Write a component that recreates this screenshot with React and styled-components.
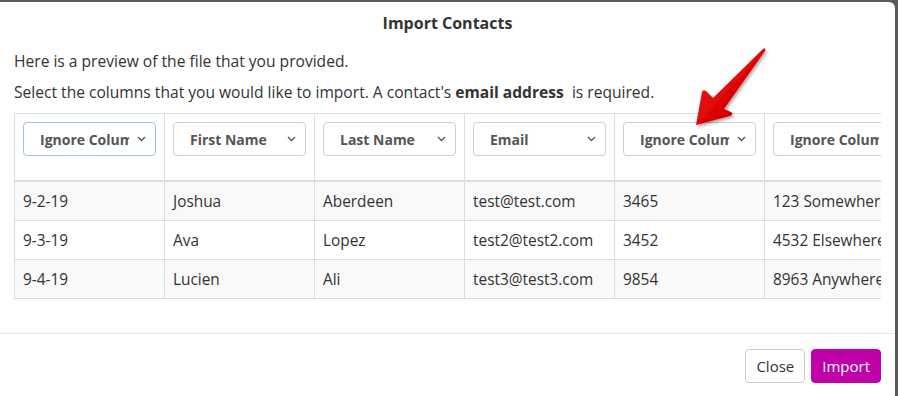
import React from "react";
import styled, { createGlobalStyle } from "styled-components";

const Global = createGlobalStyle`
  html, body { margin: 0; padding: 0; }
  body {
    background: #5b5b5b;
    font-family: "Open Sans", "Noto Sans", sans-serif;
    color: #333;
    overflow: hidden;
  }
`;

const Stage = styled.div`
  width: 898px;
  height: 396px;
  padding-top: 2px;
  box-sizing: border-box;
  position: relative;
  overflow: hidden;
`;

const Modal = styled.div`
  width: 895px;
  background: #fff;
  border-top-right-radius: 6px;
  display: flex;
  flex-direction: column;
`;

const Header = styled.div`
  padding: 11px 14px 0;
  height: 31px;
  box-sizing: border-box;
  text-align: center;
`;

const Title = styled.h4`
  margin: 0;
  font-size: 16px;
  font-weight: 700;
  line-height: 20px;
  color: #333;
`;

const Body = styled.div`
  padding: 18px 14px 0;
  height: 300px;
  flex-shrink: 0;
  box-sizing: border-box;
`;

const Para = styled.p`
  margin: 0 0 10px;
  font-size: 15.6px;
  line-height: 21px;
  color: #333;
`;

const TableWrap = styled.div`
  width: 867px;
  overflow: hidden;
`;

const Table = styled.table`
  border-collapse: collapse;
  table-layout: fixed;
  width: 1050px;
  font-size: 15.4px;
`;

const HeadCell = styled.th`
  width: 150px;
  box-sizing: border-box;
  border: 1px solid #ddd;
  border-bottom: 2px solid #ddd;
  padding: 8px 8px 24px;
  text-align: left;
  vertical-align: top;
`;

const Row = styled.tr`
  background: ${(p) => (p.$striped ? "#f9f9f9" : "#fff")};
`;

const Cell = styled.td`
  border: 1px solid #ddd;
  padding: 0 8px;
  height: 38px;
  line-height: 21px;
  color: #333;
  white-space: nowrap;
  overflow: hidden;
`;

const SelectBox = styled.div`
  position: relative;
  width: 133px;
`;

const Select = styled.select`
  appearance: none;
  -webkit-appearance: none;
  width: 133px;
  height: 34px;
  box-sizing: border-box;
  border: 1px solid ${(p) => (p.$focus ? "#9fc3e4" : "#cfcfcf")};
  border-radius: 4px;
  background: #fff;
  padding: 0 26px 0 16px;
  font-family: "Open Sans", "Noto Sans", sans-serif;
  font-size: 14px;
  font-weight: 700;
  color: #555;
  outline: none;
`;

const Chevron = styled.svg`
  position: absolute;
  right: 10px;
  top: 14px;
  pointer-events: none;
`;

const Footer = styled.div`
  border-top: 1px solid #e5e5e5;
  padding: 15px 14px;
  display: flex;
  justify-content: flex-end;
  gap: 6px;
`;

const Button = styled.button`
  height: 34px;
  padding: 0 10px;
  border-radius: 4px;
  font-family: "Open Sans", "Noto Sans", sans-serif;
  font-size: 15px;
  border: 1px solid ${(p) => (p.$primary ? "#c000a8" : "#ccc")};
  background: ${(p) => (p.$primary ? "#c000a8" : "#fff")};
  color: ${(p) => (p.$primary ? "#fff" : "#333")};
  cursor: pointer;
`;

const Arrow = styled.svg`
  position: absolute;
  left: 690px;
  top: 42px;
  overflow: visible;
`;

const options = ["Ignore Column", "First Name", "Last Name", "Email", "Ignore Column", "Ignore Column", "Ignore Column"];

const rows = [
  ["9-2-19", "Joshua", "Aberdeen", "test@test.com", "3465", "123 Somewhere St", "x"],
  ["9-3-19", "Ava", "Lopez", "test2@test2.com", "3452", "4532 Elsewhere Ave", "x"],
  ["9-4-19", "Lucien", "Ali", "test3@test3.com", "9854", "8963 Anywhere Rd", "x"],
];

function ColumnSelect({ value, focus }) {
  return (
    <SelectBox>
      <Select $focus={focus} defaultValue={value}>
        <option>Ignore Column</option>
        <option>First Name</option>
        <option>Last Name</option>
        <option>Email</option>
      </Select>
      <Chevron width="9" height="6" viewBox="0 0 9 6">
        <path d="M1 1 L4.5 4.5 L8 1" fill="none" stroke="#555" strokeWidth="1.3" />
      </Chevron>
    </SelectBox>
  );
}

export default function App() {
  return (
    <>
      <Global />
      <Stage>
        <Modal>
          <Header>
            <Title>Import Contacts</Title>
          </Header>
          <Body>
            <Para>Here is a preview of the file that you provided.</Para>
            <Para>
              Select the columns that you would like to import. A contact's <b>email address</b>&nbsp; is required.
            </Para>
            <TableWrap>
              <Table>
                <thead>
                  <tr>
                    {options.map((o, i) => (
                      <HeadCell key={i}>
                        <ColumnSelect value={o} focus={i === 0} />
                      </HeadCell>
                    ))}
                  </tr>
                </thead>
                <tbody>
                  {rows.map((r, i) => (
                    <Row key={i} $striped={i % 2 === 0}>
                      {r.map((c, j) => (
                        <Cell key={j}>{c}</Cell>
                      ))}
                    </Row>
                  ))}
                </tbody>
              </Table>
            </TableWrap>
          </Body>
          <Footer>
            <Button>Close</Button>
            <Button $primary>Import</Button>
          </Footer>
        </Modal>
        <Arrow width="90" height="95" viewBox="0 0 90 95">
          <defs>
            <linearGradient id="ag" x1="0" y1="0" x2="1" y2="1">
              <stop offset="0" stopColor="#ff2a2a" />
              <stop offset="0.6" stopColor="#d80000" />
              <stop offset="1" stopColor="#a00000" />
            </linearGradient>
            <filter id="sh" x="-20%" y="-20%" width="150%" height="150%">
              <feDropShadow dx="1.5" dy="2" stdDeviation="1.5" floodColor="#000" floodOpacity="0.35" />
            </filter>
          </defs>
          <path
            d="M6 83 L12 50 Q13 47 16 49 L23 56 L73 7 Q76 5 75 9 L34 67 L41 70 Q44 72 40 74 Z"
            fill="url(#ag)"
            filter="url(#sh)"
          />
        </Arrow>
      </Stage>
    </>
  );
}
